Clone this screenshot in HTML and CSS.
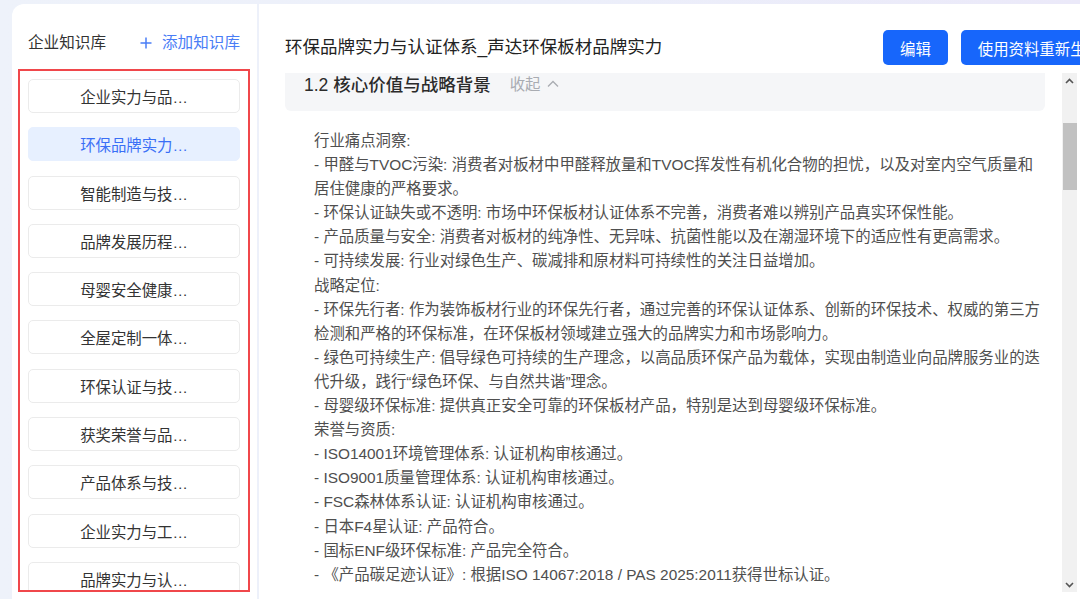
FILE: index.html
```html
<!DOCTYPE html>
<html lang="zh-CN">
<head>
<meta charset="utf-8">
<title>企业知识库</title>
<link rel="stylesheet" href="styles.css">
</head>
<body>
<div class="app">
  <aside class="sidebar">
    <div class="side-head">
      <span class="side-title">企业知识库</span>
      <span class="add-link">
        <svg class="plus" width="12" height="12" viewBox="0 0 12 12"><path d="M6 0.5V11.5M0.5 6H11.5" stroke="currentColor" stroke-width="1.5" fill="none"/></svg>
        添加知识库
      </span>
    </div>
    <div class="kb-list">
      <div class="kb-item">企业实力与品…</div>
      <div class="kb-item active">环保品牌实力…</div>
      <div class="kb-item">智能制造与技…</div>
      <div class="kb-item">品牌发展历程…</div>
      <div class="kb-item">母婴安全健康…</div>
      <div class="kb-item">全屋定制一体…</div>
      <div class="kb-item">环保认证与技…</div>
      <div class="kb-item">获奖荣誉与品…</div>
      <div class="kb-item">产品体系与技…</div>
      <div class="kb-item">企业实力与工…</div>
      <div class="kb-item">品牌实力与认…</div>
    </div>
  </aside>
  <main class="main">
    <div class="main-head">
      <h1 class="doc-title">环保品牌实力与认证体系_声达环保板材品牌实力</h1>
      <button class="btn">编辑</button>
      <button class="btn">使用资料重新生成</button>
    </div>
    <div class="scroll-area">
      <div class="content">
        <div class="section-head">
          <span class="section-title">1.2 核心价值与战略背景</span>
          <span class="collapse">收起
            <svg width="12" height="8" viewBox="0 0 12 8"><path d="M1 6.5L6 1.5L11 6.5" stroke="currentColor" stroke-width="1.3" fill="none"/></svg>
          </span>
        </div>
        <div class="body-text">
          <p>行业痛点洞察:</p>
          <p>- 甲醛与TVOC污染: 消费者对板材中甲醛释放量和TVOC挥发性有机化合物的担忧，以及对室内空气质量和居住健康的严格要求。</p>
          <p>- 环保认证缺失或不透明: 市场中环保板材认证体系不完善，消费者难以辨别产品真实环保性能。</p>
          <p>- 产品质量与安全: 消费者对板材的纯净性、无异味、抗菌性能以及在潮湿环境下的适应性有更高需求。</p>
          <p>- 可持续发展: 行业对绿色生产、碳减排和原材料可持续性的关注日益增加。</p>
          <p>战略定位:</p>
          <p>- 环保先行者: 作为装饰板材行业的环保先行者，通过完善的环保认证体系、创新的环保技术、权威的第三方检测和严格的环保标准，在环保板材领域建立强大的品牌实力和市场影响力。</p>
          <p>- 绿色可持续生产: 倡导绿色可持续的生产理念，以高品质环保产品为载体，实现由制造业向品牌服务业的迭代升级，践行“绿色环保、与自然共谐”理念。</p>
          <p>- 母婴级环保标准: 提供真正安全可靠的环保板材产品，特别是达到母婴级环保标准。</p>
          <p>荣誉与资质:</p>
          <p>- ISO14001环境管理体系: 认证机构审核通过。</p>
          <p>- ISO9001质量管理体系: 认证机构审核通过。</p>
          <p>- FSC森林体系认证: 认证机构审核通过。</p>
          <p>- 日本F4星认证: 产品符合。</p>
          <p>- 国标ENF级环保标准: 产品完全符合。</p>
          <p>- 《产品碳足迹认证》: 根据ISO 14067:2018 / PAS 2025:2011获得世标认证。</p>
        </div>
      </div>
      <div class="scrollbar">
        <div class="sb-arrow"><svg width="9" height="6" viewBox="0 0 9 6"><path d="M1 5L4.5 1.5L8 5" stroke="#555" stroke-width="1.6" fill="none"/></svg></div>
        <div class="sb-gap"></div>
        <div class="sb-thumb"></div>
        <div class="sb-rest"></div>
        <div class="sb-arrow"><svg width="9" height="6" viewBox="0 0 9 6"><path d="M1 1L4.5 4.5L8 1" stroke="#555" stroke-width="1.6" fill="none"/></svg></div>
      </div>
    </div>
  </main>
</div>
</body>
</html>
```

FILE: styles.css
```css
* { box-sizing: border-box; }

html, body {
  margin: 0;
  padding: 0;
}

body {
  width: 1080px;
  height: 599px;
  overflow: hidden;
  font-family: "Liberation Sans", "Noto Sans CJK SC", sans-serif;
  background: linear-gradient(90deg, #eef2fa 0%, #eceffa 50%, #ebe9f9 100%);
  color: #333;
}

.app {
  display: flex;
  height: 599px;
  padding: 4px 0 0 12px;
  gap: 2px;
}

/* Sidebar */
.sidebar {
  flex: 0 0 245px;
  background: #fff;
  border-top-left-radius: 12px;
  padding: 0 7px 0 6px;
  display: flex;
  flex-direction: column;
}

.side-head {
  display: flex;
  justify-content: space-between;
  align-items: center;
  padding: 28px 10px 0 10px;
  height: 50px;
  font-size: 15.6px;
  line-height: 22px;
}

.side-title {
  color: #333;
}

.add-link {
  color: #4a7df6;
  display: flex;
  align-items: center;
  gap: 10px;
}

.plus {
  display: block;
}

.kb-list {
  margin-top: 15px;
  height: 523px;
  border: 2px solid #f0474b;
  padding: 8px;
  overflow: hidden;
  display: flex;
  flex-direction: column;
  gap: 14.3px;
}

.kb-item {
  flex: 0 0 34px;
  border: 1px solid #ebebeb;
  border-radius: 5px;
  display: flex;
  align-items: center;
  justify-content: center;
  font-size: 15.4px;
  color: #333;
  white-space: nowrap;
}

.kb-item.active {
  background: #e7f0ff;
  border-color: #e7f0ff;
  color: #3a6ff6;
}

/* Main */
.main {
  flex: 1;
  min-width: 0;
  background: #fff;
  overflow: hidden;
  padding-left: 26px;
}

.main-head {
  display: flex;
  align-items: center;
  padding-top: 26px;
  height: 61px;
}

.doc-title {
  flex: 0 0 598px;
  margin: 0;
  font-size: 17.5px;
  font-weight: normal;
  color: #222;
  line-height: 35px;
  white-space: nowrap;
}

.btn {
  flex: 0 0 auto;
  height: 35px;
  padding: 0 17px;
  border: none;
  border-radius: 5px;
  background: #1766fb;
  color: #fff;
  font-family: inherit;
  font-size: 15.4px;
  white-space: nowrap;
  margin-right: 13px;
}

.scroll-area {
  margin-top: 8px;
  height: 519px;
  display: flex;
  gap: 17px;
  overflow: hidden;
}

.content {
  flex: 0 0 760px;
  overflow: hidden;
}

.section-head {
  background: #f5f6f8;
  border-radius: 0 0 6px 6px;
  padding: 0 19px 14px;
  height: 38px;
  display: flex;
  align-items: flex-start;
  gap: 19px;
  line-height: 24px;
}

.section-title {
  font-size: 17.5px;
  font-weight: 500;
  color: #2b2b2b;
}

.collapse {
  font-size: 15.4px;
  color: #a9acb2;
  display: flex;
  align-items: center;
  gap: 6px;
}

.collapse svg {
  display: block;
  margin-top: -2px;
}

.body-text {
  padding: 18px 0 0 29px;
  font-size: 15.4px;
  line-height: 24.1px;
  color: #4f4f4f;
}

.body-text p {
  margin: 0;
}

.scrollbar {
  flex: 0 0 15px;
  background: #f1f1f1;
  display: flex;
  flex-direction: column;
}

.sb-arrow {
  flex: 0 0 15px;
  display: flex;
  align-items: center;
  justify-content: center;
}

.sb-gap {
  flex: 0 0 35px;
}

.sb-thumb {
  flex: 0 0 67px;
  background: #c1c1c1;
  margin-left: 1px;
}

.sb-rest {
  flex: 1;
}
```
